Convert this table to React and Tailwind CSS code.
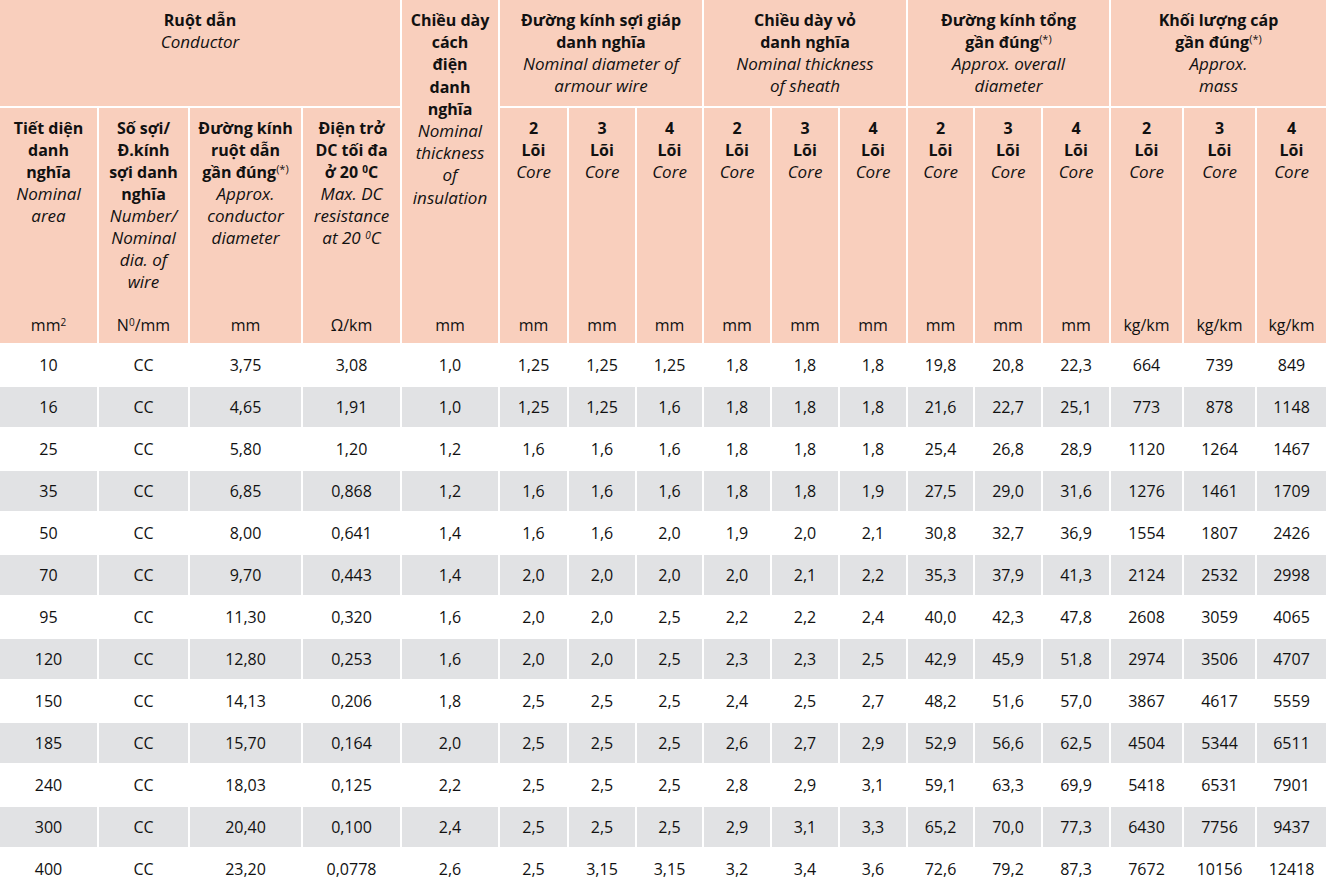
import React from "react";

const rows = [
  ["10","CC","3,75","3,08","1,0","1,25","1,25","1,25","1,8","1,8","1,8","19,8","20,8","22,3","664","739","849"],
  ["16","CC","4,65","1,91","1,0","1,25","1,25","1,6","1,8","1,8","1,8","21,6","22,7","25,1","773","878","1148"],
  ["25","CC","5,80","1,20","1,2","1,6","1,6","1,6","1,8","1,8","1,8","25,4","26,8","28,9","1120","1264","1467"],
  ["35","CC","6,85","0,868","1,2","1,6","1,6","1,6","1,8","1,8","1,9","27,5","29,0","31,6","1276","1461","1709"],
  ["50","CC","8,00","0,641","1,4","1,6","1,6","2,0","1,9","2,0","2,1","30,8","32,7","36,9","1554","1807","2426"],
  ["70","CC","9,70","0,443","1,4","2,0","2,0","2,0","2,0","2,1","2,2","35,3","37,9","41,3","2124","2532","2998"],
  ["95","CC","11,30","0,320","1,6","2,0","2,0","2,5","2,2","2,2","2,4","40,0","42,3","47,8","2608","3059","4065"],
  ["120","CC","12,80","0,253","1,6","2,0","2,0","2,5","2,3","2,3","2,5","42,9","45,9","51,8","2974","3506","4707"],
  ["150","CC","14,13","0,206","1,8","2,5","2,5","2,5","2,4","2,5","2,7","48,2","51,6","57,0","3867","4617","5559"],
  ["185","CC","15,70","0,164","2,0","2,5","2,5","2,5","2,6","2,7","2,9","52,9","56,6","62,5","4504","5344","6511"],
  ["240","CC","18,03","0,125","2,2","2,5","2,5","2,5","2,8","2,9","3,1","59,1","63,3","69,9","5418","6531","7901"],
  ["300","CC","20,40","0,100","2,4","2,5","2,5","2,5","2,9","3,1","3,3","65,2","70,0","77,3","6430","7756","9437"],
  ["400","CC","23,20","0,0778","2,6","2,5","3,15","3,15","3,2","3,4","3,6","72,6","79,2","87,3","7672","10156","12418"],
];

const Star = () => <sup className="text-[11px] font-normal">(*)</sup>;

function TopCell({ span, bold, italic }) {
  return (
    <div className={`${span} h-[106px] bg-[#f9cfbd] flex flex-col items-center pt-[9px] text-center leading-[22px]`}>
      <div className="font-bold">{bold}</div>
      <div className="italic text-[17px]">{italic}</div>
    </div>
  );
}

function SubCell({ bold, italic, unit }) {
  return (
    <div className="h-[235px] bg-[#f9cfbd] flex flex-col items-center justify-between pt-[9px] pb-[7px] text-center leading-[22px]">
      <div>
        <div className="font-bold">{bold}</div>
        <div className="italic text-[17px]">{italic}</div>
      </div>
      <div>{unit}</div>
    </div>
  );
}

function CoreCell({ n, unit }) {
  return (
    <SubCell
      bold={<>{n}<br />Lõi</>}
      italic="Core"
      unit={unit}
    />
  );
}

export default function App() {
  return (
    <div className="w-[1326px] h-[891px] overflow-hidden bg-white font-['Open_Sans',sans-serif] text-[16px] text-[#111111]">
      <div className="grid grid-cols-[97px_89px_111px_97px_96px_67px_66px_65px_66px_66px_66px_65px_66px_66px_71px_71px_69px] gap-[2px] bg-white">
        <TopCell span="col-span-4" bold="Ruột dẫn" italic="Conductor" />
        <div className="row-span-2 h-[343px] bg-[#f9cfbd] flex flex-col items-center justify-between pt-[9px] pb-[7px] text-center leading-[22.2px]">
          <div>
            <div className="font-bold">Chiều dày<br />cách<br />điện<br />danh<br />nghĩa</div>
            <div className="italic text-[17px]">Nominal<br />thickness<br />of<br />insulation</div>
          </div>
          <div>mm</div>
        </div>
        <TopCell span="col-span-3" bold={<>Đường kính sợi giáp<br />danh nghĩa</>} italic={<>Nominal diameter of<br />armour wire</>} />
        <TopCell span="col-span-3" bold={<>Chiều dày vỏ<br />danh nghĩa</>} italic={<>Nominal thickness<br />of sheath</>} />
        <TopCell span="col-span-3" bold={<>Đường kính tổng<br />gần đúng<Star /></>} italic={<>Approx. overall<br />diameter</>} />
        <TopCell span="col-span-3" bold={<>Khối lượng cáp<br />gần đúng<Star /></>} italic={<>Approx.<br />mass</>} />

        <SubCell bold={<>Tiết diện<br />danh<br />nghĩa</>} italic={<>Nominal<br />area</>} unit={<>mm<sup className="text-[10px]">2</sup></>} />
        <SubCell bold={<>Số sợi/<br />Đ.kính<br />sợi danh<br />nghĩa</>} italic={<>Number/<br />Nominal<br />dia. of<br />wire</>} unit={<>N<sup className="text-[10px]">0</sup>/mm</>} />
        <SubCell bold={<>Đường kính<br />ruột dẫn<br />gần đúng<Star /></>} italic={<>Approx.<br />conductor<br />diameter</>} unit="mm" />
        <SubCell bold={<>Điện trở<br />DC tối đa<br />ở 20 <sup className="text-[10px]">0</sup>C</>} italic={<>Max. DC<br />resistance<br />at 20 <sup className="text-[10px]">0</sup>C</>} unit="Ω/km" />
        <CoreCell n="2" unit="mm" />
        <CoreCell n="3" unit="mm" />
        <CoreCell n="4" unit="mm" />
        <CoreCell n="2" unit="mm" />
        <CoreCell n="3" unit="mm" />
        <CoreCell n="4" unit="mm" />
        <CoreCell n="2" unit="mm" />
        <CoreCell n="3" unit="mm" />
        <CoreCell n="4" unit="mm" />
        <CoreCell n="2" unit="kg/km" />
        <CoreCell n="3" unit="kg/km" />
        <CoreCell n="4" unit="kg/km" />

        {rows.map((r, i) =>
          r.map((v, j) => (
            <div
              key={`${i}-${j}`}
              className={`h-[40px] flex items-center justify-center whitespace-nowrap ${i % 2 === 1 ? "bg-[#e1e2e4]" : "bg-white"}`}
            >
              {v}
            </div>
          ))
        )}
      </div>
    </div>
  );
}
